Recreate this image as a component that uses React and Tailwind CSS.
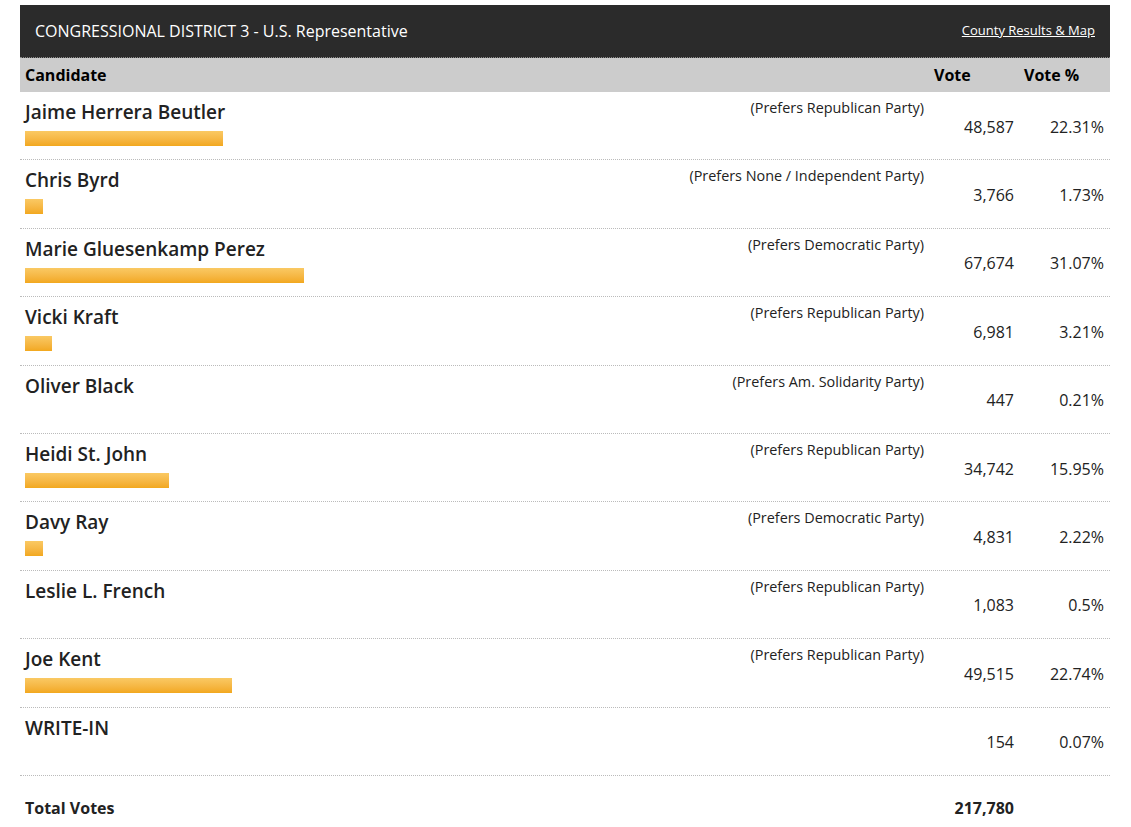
import React from 'react';

const candidates = [
    { name: 'Jaime Herrera Beutler', party: '(Prefers Republican Party)', votes: '48,587', pct: '22.31%', bar: 198 },
    { name: 'Chris Byrd', party: '(Prefers None / Independent Party)', votes: '3,766', pct: '1.73%', bar: 18 },
    { name: 'Marie Gluesenkamp Perez', party: '(Prefers Democratic Party)', votes: '67,674', pct: '31.07%', bar: 279 },
    { name: 'Vicki Kraft', party: '(Prefers Republican Party)', votes: '6,981', pct: '3.21%', bar: 27 },
    { name: 'Oliver Black', party: '(Prefers Am. Solidarity Party)', votes: '447', pct: '0.21%', bar: 0 },
    { name: 'Heidi St. John', party: '(Prefers Republican Party)', votes: '34,742', pct: '15.95%', bar: 144 },
    { name: 'Davy Ray', party: '(Prefers Democratic Party)', votes: '4,831', pct: '2.22%', bar: 18 },
    { name: 'Leslie L. French', party: '(Prefers Republican Party)', votes: '1,083', pct: '0.5%', bar: 0 },
    { name: 'Joe Kent', party: '(Prefers Republican Party)', votes: '49,515', pct: '22.74%', bar: 207 },
    { name: 'WRITE-IN', party: '', votes: '154', pct: '0.07%', bar: 0 },
];

const CandidateRow = ({ c }) => (
    <div className="grid grid-cols-[909px_90px_91px] h-[68.4px] border-b border-dotted border-[#bbb]">
        <div className="flex justify-between pt-[5px] px-[5px]">
            <div>
                <div className="text-[19px] h-[27px] pt-[1px] font-semibold text-[#222] leading-normal">{c.name}</div>
                {c.bar > 0 && (
                    <div
                        className="mt-[7px] h-[15px] bg-linear-to-b from-[#fac963] to-[#f2a81d]"
                        style={{ width: c.bar }}
                    />
                )}
            </div>
            <div className="text-[14.4px] text-[#222] leading-normal">{c.party}</div>
        </div>
        <div className="flex items-center justify-end pt-[2px] pr-[5px] text-[16px] text-[#222]">{c.votes}</div>
        <div className="flex items-center justify-end pt-[2px] pr-[6px] text-[16px] text-[#222]">{c.pct}</div>
    </div>
);

export default function App() {
    return (
        <div className="min-h-screen bg-white pt-[5px]" style={{ fontFamily: '"Open Sans", sans-serif' }}>
            <div className="ml-[20px] w-[1090px]">
                <div className="flex items-center justify-between h-[53px] bg-[#2b2b2b] border-b border-dotted border-[#888] px-[15px]">
                    <span className="text-[16px] text-white">CONGRESSIONAL DISTRICT 3 - U.S. Representative</span>
                    <a href="#" className="text-[13px] text-white underline">County Results &amp; Map</a>
                </div>
                <div className="grid grid-cols-[909px_90px_91px] h-[34px] bg-[#cccccc] text-[16px] font-bold text-black">
                    <div className="flex items-center px-[5px]">Candidate</div>
                    <div className="flex items-center px-[5px]">Vote</div>
                    <div className="flex items-center px-[5px]">Vote %</div>
                </div>
                {candidates.map((c) => (
                    <CandidateRow key={c.name} c={c} />
                ))}
                <div className="grid grid-cols-[909px_90px_91px] pt-[20px] pb-[10px] text-[16px] font-bold text-[#222]">
                    <div className="px-[5px]">Total Votes</div>
                    <div className="text-right pr-[5px]">217,780</div>
                    <div />
                </div>
            </div>
        </div>
    );
}
